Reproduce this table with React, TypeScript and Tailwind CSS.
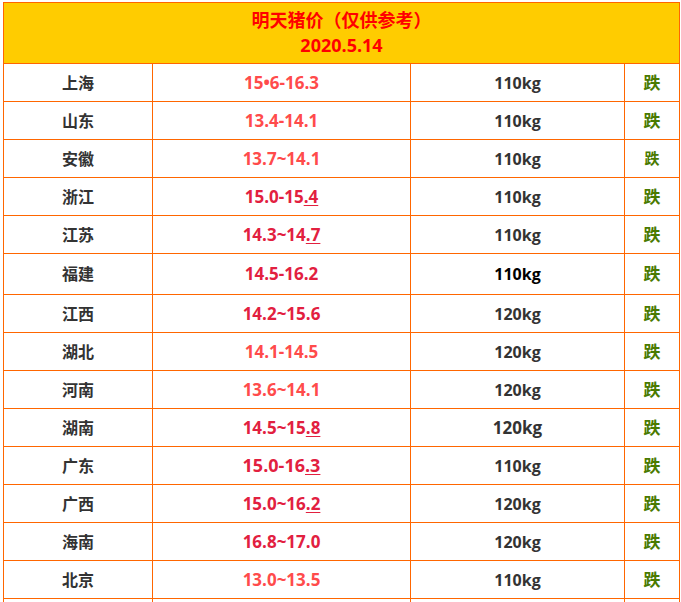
const font = {fontFamily: '"Open Sans", "Noto Sans CJK SC", sans-serif'};

interface Row {
  city: string;
  price: string;
  tail?: string;
  priceColor: string;
  priceSize?: string;
  weight: string;
  weightColor?: string;
  weightSize?: string;
  fallSize?: string;
  h?: string;
}

const LIGHT = "text-[#ff4b4b]";
const DEEP = "text-[#e2203f]";

const rows: Row[] = [
  {city: "上海", price: "15•6-16.3", priceColor: LIGHT, weight: "110kg"},
  {city: "山东", price: "13.4-14.1", priceColor: LIGHT, weight: "110kg"},
  {city: "安徽", price: "13.7~14.1", priceColor: LIGHT, weight: "110kg", fallSize: "text-[15px]"},
  {city: "浙江", price: "15.0-15", tail: ".4", priceColor: DEEP, weight: "110kg"},
  {city: "江苏", price: "14.3~14", tail: ".7", priceColor: DEEP, weight: "110kg"},
  {city: "福建", price: "14.5-16.2", priceColor: DEEP, weight: "110kg", weightColor: "text-black", h: "h-[41px]"},
  {city: "江西", price: "14.2~15.6", priceColor: DEEP, weight: "120kg"},
  {city: "湖北", price: "14.1-14.5", priceColor: LIGHT, weight: "120kg"},
  {city: "河南", price: "13.6~14.1", priceColor: LIGHT, weight: "120kg"},
  {city: "湖南", price: "14.5~15", tail: ".8", priceColor: DEEP, weight: "120kg", weightSize: "text-[17px]"},
  {city: "广东", price: "15.0-16", tail: ".3", priceColor: DEEP, priceSize: "text-[18px]", weight: "110kg"},
  {city: "广西", price: "15.0~16", tail: ".2", priceColor: DEEP, weight: "120kg"},
  {city: "海南", price: "16.8~17.0", priceColor: DEEP, weight: "120kg"},
  {city: "北京", price: "13.0~13.5", priceColor: LIGHT, weight: "110kg"},
  {city: "", price: "", priceColor: LIGHT, weight: ""},
];

const cell = "border border-[#ff6600] text-center align-middle font-bold";

export default function App() {
  return (
    <div className="bg-white pl-[3px] pt-[2px] w-[681px] h-[602px] overflow-hidden" style={font}>
      <table className="border-collapse w-[676px] table-fixed">
        <colgroup>
          <col className="w-[149px]" />
          <col className="w-[258px]" />
          <col className="w-[214px]" />
          <col className="w-[55px]" />
        </colgroup>
        <thead>
          <tr>
            <th
              colSpan={4}
              className="border border-[#ff6600] bg-[#ffcc00] h-[61px] text-[#ff0000] text-[18px] font-bold leading-[25px]"
            >
              <div>明天猪价（仅供参考）</div>
              <div>2020.5.14</div>
            </th>
          </tr>
        </thead>
        <tbody>
          {rows.map((r, i) => (
            <tr key={i} className={r.h ?? "h-[38px]"}>
              <td className={`${cell} text-[16px] text-[#333333]`}>{r.city}</td>
              <td className={`${cell} ${r.priceSize ?? "text-[17px]"} ${r.priceColor}`}>
                {r.price}
                {r.tail && <span className="underline underline-offset-2">{r.tail}</span>}
              </td>
              <td className={`${cell} ${r.weightSize ?? "text-[16px]"} ${r.weightColor ?? "text-[#333333]"}`}>
                {r.weight}
              </td>
              <td className={`${cell} ${r.fallSize ?? "text-[17px]"} text-[#4a7a00]`}>
                {r.city ? "跌" : ""}
              </td>
            </tr>
          ))}
        </tbody>
      </table>
    </div>
  );
}
